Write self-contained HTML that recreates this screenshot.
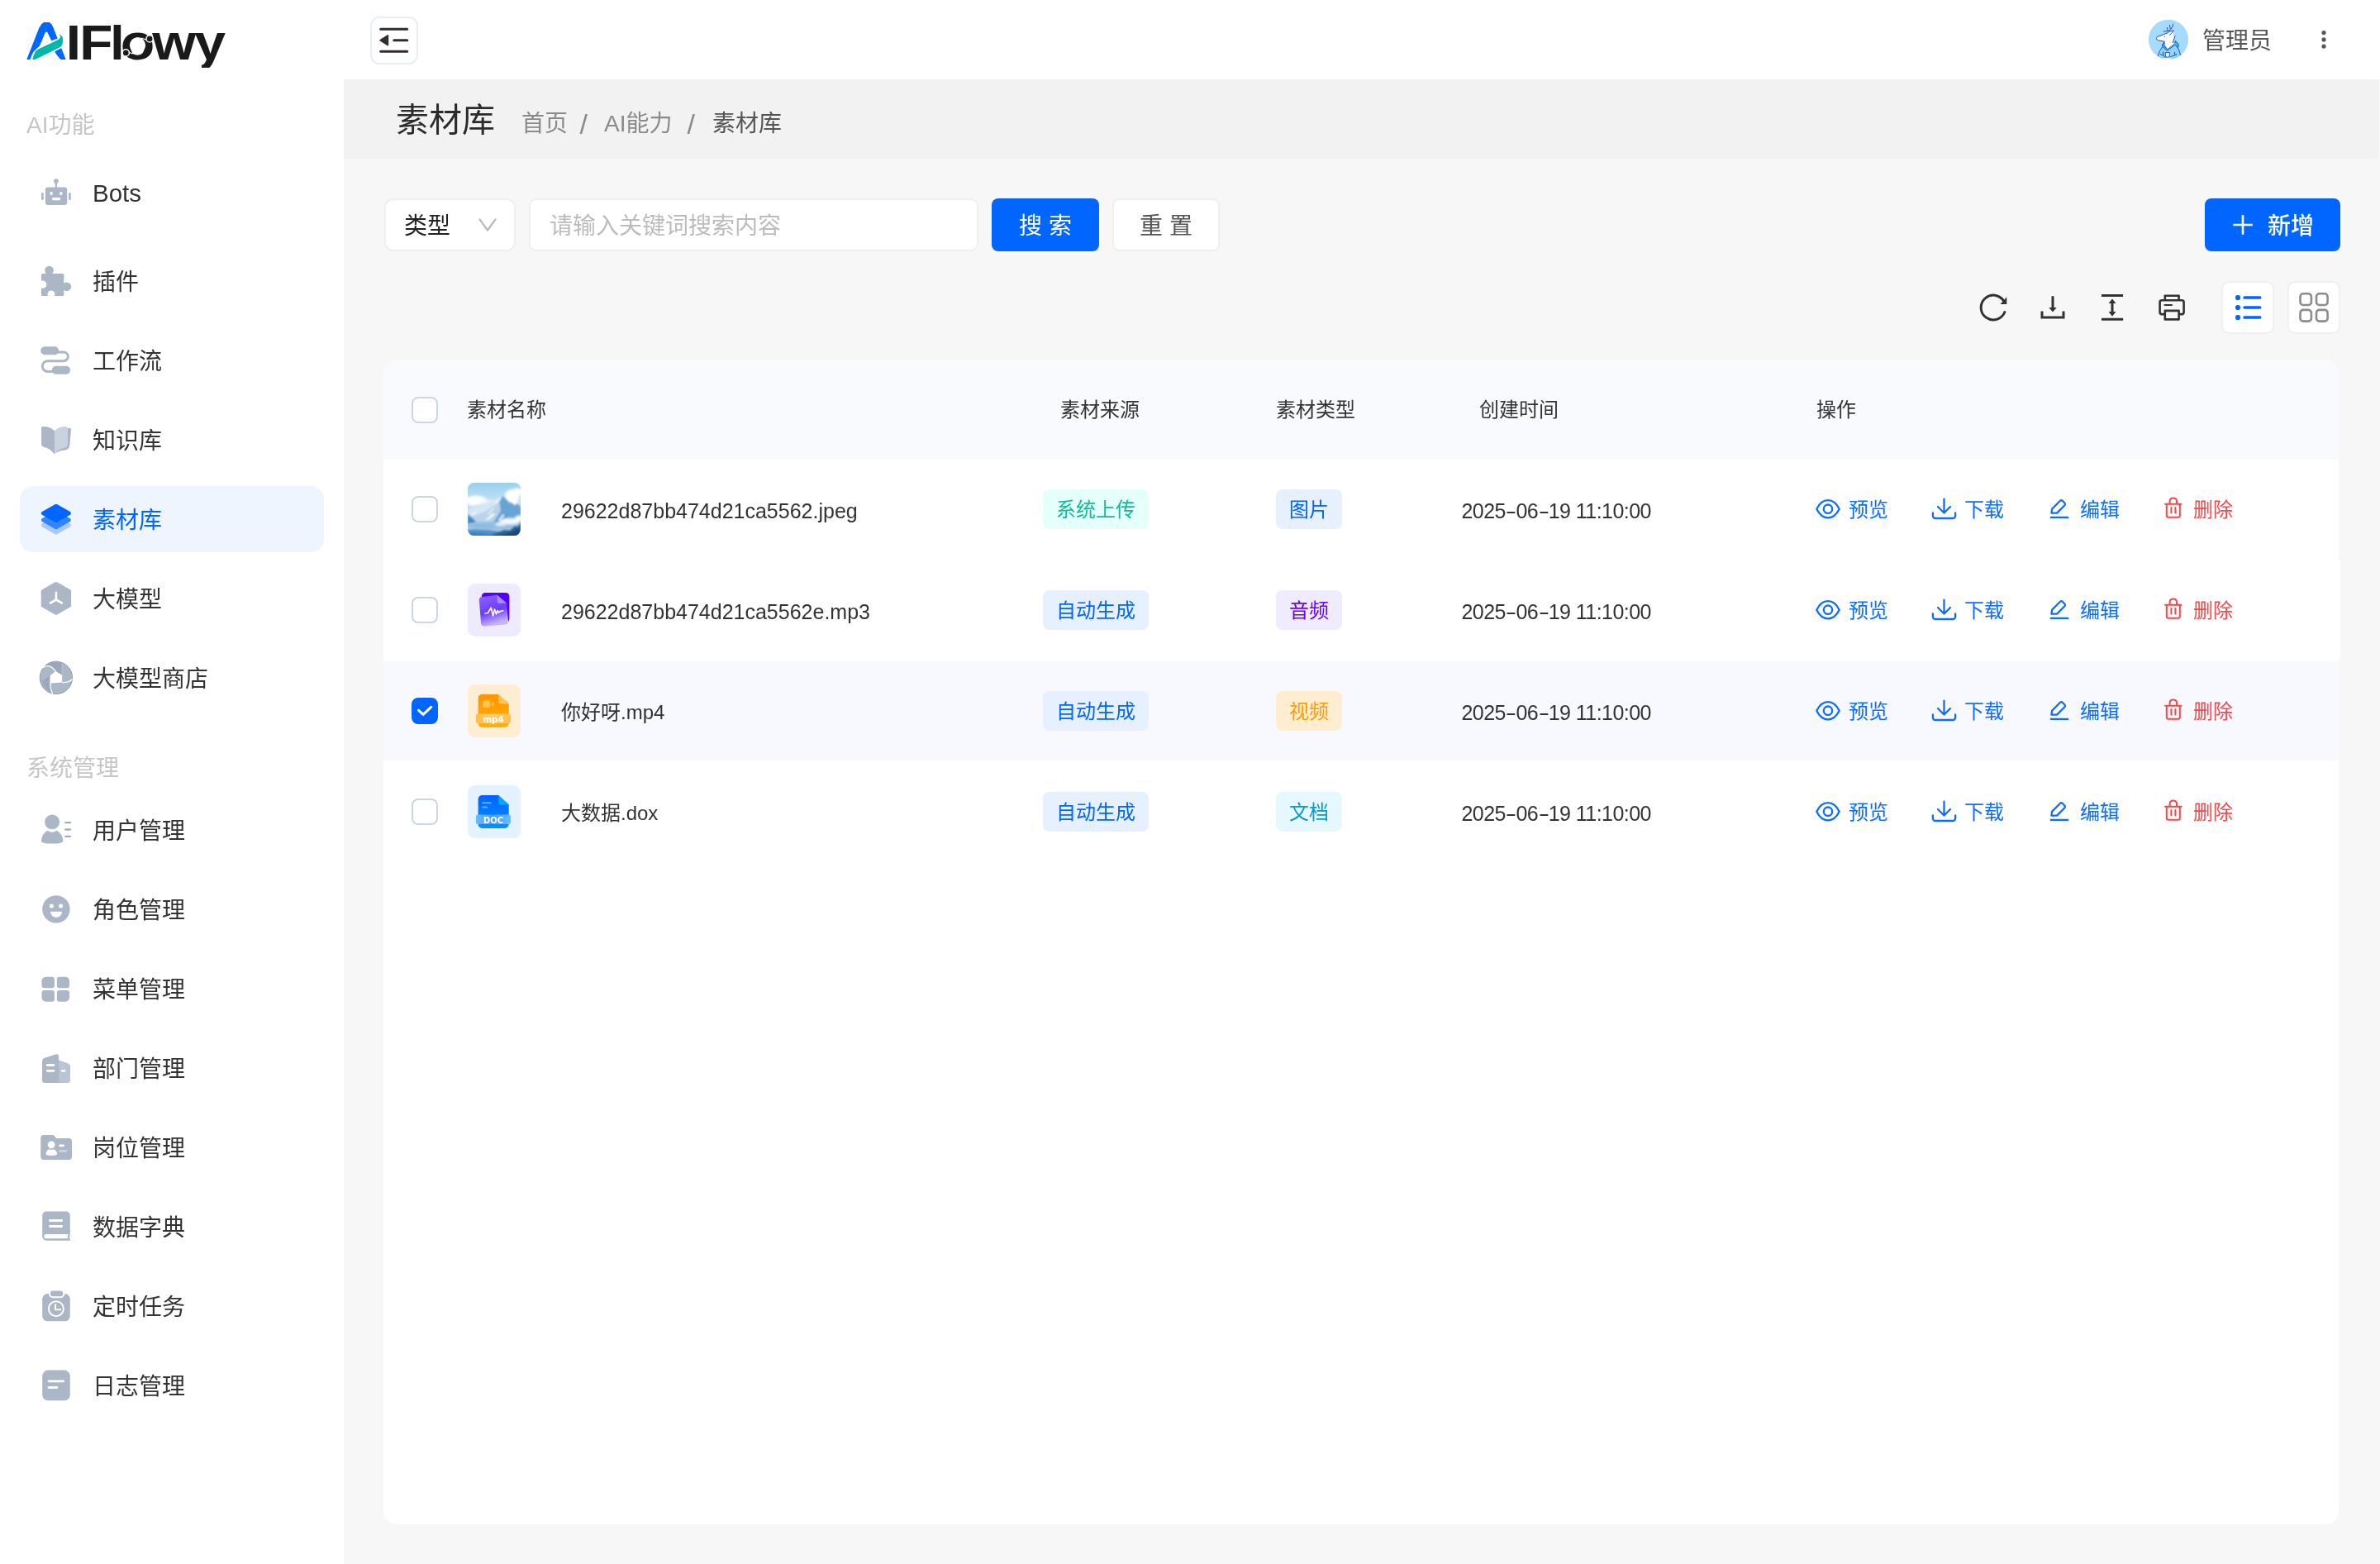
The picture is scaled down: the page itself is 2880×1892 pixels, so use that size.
<!DOCTYPE html>
<html lang="zh-CN"><head><meta charset="utf-8"><title>素材库 - AIFlowy</title>
<style>
*{box-sizing:border-box;margin:0;padding:0}
html,body{width:2880px;height:1892px;overflow:hidden;background:#f7f7f7}
@media (max-width:1500px){html{zoom:0.5}}
body{position:relative;will-change:transform;font-family:"Liberation Sans","Noto Sans CJK SC",sans-serif;color:#333;-webkit-font-smoothing:antialiased}
.abs,.sl,.cb,.fn,.tag,.dt,.ac,.th,.sec,.bc{position:absolute;white-space:nowrap}
#side{position:absolute;left:0;top:0;width:416px;height:1892px;background:#fff}
#head{position:absolute;left:416px;top:0;width:2464px;height:96px;background:#fff}
#crumb{position:absolute;left:416px;top:96px;width:2462px;height:96px;background:#f2f2f2}
.sec{left:32px;font-size:28px;line-height:40px;color:#c6c6c6}
.sl{left:112px;font-size:28px;line-height:40px;height:40px;color:#333}
.sl.act{color:#0066ff}
#actbg{position:absolute;left:24px;top:588px;width:368px;height:80px;border-radius:16px;background:#eff5ff}
svg{position:absolute;left:0;top:0;overflow:visible}
#card{position:absolute;left:464px;top:436px;width:2366px;height:1408px;background:#fff;border-radius:16px;overflow:hidden}
#thead{position:absolute;left:0;top:0;width:100%;height:120px;background:#f9fafe}
#selrow{position:absolute;left:0;top:364px;width:100%;height:120px;background:#f8f9fe}
.th{font-size:24px;line-height:36px;top:478px;color:#333}
.cb{left:498px;width:32px;height:32px;border:2px solid #ccd6e3;border-radius:8px;background:#fff}
.cb.on{background:#0066ff;border-color:#0066ff;box-shadow:0 0 0 1.2px #fff}
.fn{left:679px;font-size:24px;line-height:40px;color:#333}
.dt{left:1768.5px;font-size:25px;line-height:42px;letter-spacing:-0.55px;color:#333}
.dt i{font-style:normal;display:inline-block;transform:scaleX(1.6);margin:0 2.4px}
.tag{height:48px;line-height:50px;font-size:24px;text-align:center;border-radius:8px}
.tg{background:#e5fffa;color:#14b89a}
.tb{background:#e6f0ff;color:#0066ff}
.tp{background:#f0ebff;color:#6600ff}
.to{background:#ffedd1;color:#ff9b05}
.tc{background:#e5f8fe;color:#0a9ac7}
.ac{font-size:24px;line-height:40px}
.ab{color:#0d6efd}
.ar{color:#f5484a}
.btn{position:absolute;height:64px;line-height:64px;font-size:28px;text-align:center;border-radius:8px;white-space:nowrap}
</style></head><body>
<div id="side"></div>
<div id="head"></div>
<div id="crumb"></div>
<div id="actbg"></div>

<!-- logo -->
<svg width="416" height="96" viewBox="0 0 416 96"><text transform="matrix(0.66 0 0 0.6 0 72)" font-family="'Liberation Sans',sans-serif" font-weight="700" fill="#1a1a1a"><tspan x="46.21" font-size="106.9" fill="#0066ff">A</tspan><tspan x="121.02" font-size="99.6">I</tspan><tspan x="145.79" font-size="99.6">F</tspan><tspan x="201.89" font-size="94.5">l</tspan><tspan x="221" font-size="103">o</tspan><tspan x="279.05" font-size="103">w</tspan><tspan x="356.36" font-size="103">y</tspan></text><path d="M46.5 26.5 H54 Q50.3 28 48.3 32.6 L46.5 33 Z M66 26.5 H58.6 Q62.3 28 64.2 32.6 L66 33 Z" fill="#fff"/><path d="M56.3 38.4 L47.5 56.1 L43.6 59.4 L40.4 62.8 L38.3 67 L36.4 72.6 H74 L69.5 67.5 Q67.2 64.5 66.3 62.2 L74.5 58 L77 58 L71.8 45.8 L62.3 49.2 L57.8 40 Z" fill="#fff"/><path d="M39.2 72 Q40.5 66 42.9 62.2 Q44.3 60.2 46.8 59.2 L70.6 47.9 Q73.2 46.5 73.2 44.3 Q73 42.2 70.6 41.3 Q74.5 41.8 75.9 45.8 Q76.8 50 75.3 54 Q74.3 56.5 72 57.4 L43.5 71.6 Q42.8 72 42 72 Z" fill="#00b8a9"/><path d="M53.6 41.5 L56.3 33.8 L59 41.5 Q56.3 35.6 53.6 41.5Z" fill="#0066ff"/><rect x="234" y="81.9" width="30" height="5" fill="#fff"/><rect x="235" y="75.5" width="9" height="8" fill="#fff"/><circle cx="166.5" cy="54.8" r="9.6" fill="#fff"/><path d="M176.6 48.3 Q173.5 46.3 170.2 46" fill="none" stroke="#fff" stroke-width="1.1"/><path d="M156.4 63.4 Q160 65 164.4 64.9" fill="none" stroke="#fff" stroke-width="1.1"/><circle cx="152.3" cy="63.9" r="4.1" fill="#1a1a1a" stroke="#fff" stroke-width="1.5"/><circle cx="181.1" cy="46.9" r="4.1" fill="#1a1a1a" stroke="#fff" stroke-width="1.5"/></svg>

<div class="sec" style="top:132px">AI功能</div>
<div class="sec" style="top:910px">系统管理</div>
<div class="sl" style="top:216px;font-size:29.5px;top:214px">Bots</div>
<div class="sl" style="top:322px">插件</div>
<div class="sl" style="top:418px">工作流</div>
<div class="sl" style="top:514px">知识库</div>
<div class="sl act" style="top:610px">素材库</div>
<div class="sl" style="top:706px">大模型</div>
<div class="sl" style="top:802px">大模型商店</div>
<div class="sl" style="top:986px">用户管理</div>
<div class="sl" style="top:1082px">角色管理</div>
<div class="sl" style="top:1178px">菜单管理</div>
<div class="sl" style="top:1274px">部门管理</div>
<div class="sl" style="top:1370px">岗位管理</div>
<div class="sl" style="top:1466px">数据字典</div>
<div class="sl" style="top:1562px">定时任务</div>
<div class="sl" style="top:1658px">日志管理</div>
<svg width="416" height="1892" viewBox="0 0 416 1892">
<g fill="#abb6c6"><rect x="54.9" y="226.5" width="26.3" height="21.5" rx="3.2"/><circle cx="67.9" cy="219.1" r="2.9"/><rect x="66.8" y="219" width="2.2" height="8"/><rect x="50.1" y="233" width="2.6" height="9" rx="1.3"/><rect x="83.2" y="233" width="2.6" height="9" rx="1.3"/></g>
<g fill="#fff"><circle cx="62.1" cy="234" r="1.9"/><circle cx="73.8" cy="234" r="1.9"/><rect x="62.9" y="238.9" width="10.3" height="3.4" rx="1.7"/></g>
<g fill="#abb6c6"><rect x="50" y="331.1" width="27.3" height="26.9" rx="1.6"/><circle cx="59.5" cy="327.1" r="5.4"/><circle cx="80.7" cy="346.8" r="5.4"/></g><g fill="#fff"><circle cx="51.8" cy="344.2" r="4.6"/><circle cx="62" cy="356" r="4.5"/></g>
<g fill="#abb6c6"><rect x="49.3" y="419.3" width="21.8" height="10" rx="5"/><rect x="62.9" y="442.7" width="22.1" height="10" rx="5"/></g><path d="M69 426 H77 a5.35 5.35 0 0 1 0 10.7 H57.7 a6.4 6.4 0 0 0 0 12.8 H66" fill="none" stroke="#abb6c6" stroke-width="2.9"/>
<path d="M82 518 h2.6 q1.5 0 1.4 1.5 L84.4 538 q-0.6 6 -6 6.6 q-7 0.6 -11 3.4 L66 540 Z" fill="#abb6c6"/>
<path d="M50 518 q0 -2 2 -2 q8.5 -0.3 14 5.3 V549.7 q-5 -7 -12 -8.6 q-4 -1 -4 -5.2 Z" fill="#abb6c6"/>
<path d="M66 521.3 q5.5 -5.6 14 -5.3 q2 0 2 2 V536.5 q0 4.6 -4 5.2 q-8 1.2 -12 7.7 Z" fill="#c9d3e0"/>
<path d="M52 635.3 L67.9 626.3 L83.8 635.3 L67.9 644.3 Z" fill="#a6c8ff" stroke="#a6c8ff" stroke-width="4.2" stroke-linejoin="round"/><path d="M52 629.1 L67.9 620.1 L83.8 629.1 L67.9 638.1 Z" fill="#3384ff" stroke="#3384ff" stroke-width="4.2" stroke-linejoin="round"/><path d="M52 620.9 L67.9 611.9 L83.8 620.9 L67.9 629.9 Z" fill="#0066ff" stroke="#0066ff" stroke-width="4.2" stroke-linejoin="round"/>
<path d="M67.9 706.5 L83.6 715.4 V732.4 L67.9 741.3 L52.2 732.4 V715.4 Z" fill="#abb6c6" stroke="#abb6c6" stroke-width="5" stroke-linejoin="round"/><path d="M67.9 716.9 V725.5 M60.9 729.5 L67.9 725.5 L74.9 729.5" fill="none" stroke="#fff" stroke-width="2.6" stroke-linecap="round" stroke-linejoin="round"/>
<circle cx="67.9" cy="819.9" r="19.7" fill="#abb6c6" stroke="#8190a8" stroke-width="0.8"/>
<path d="M52 808 Q60 798 72 800.3 L75.1 803 V816.8 L67.2 811.7 Q60 803 52 808Z" fill="#9ba7b9"/>
<path d="M51 824.5 L60.5 817 V826.8 L62.5 838.8 Q54 835 51 824.5Z" fill="#9da9bb"/>
<path d="M60.5 817.6 L67.2 811.7 L75.1 816.8 V825.5 L60.5 826.8 Z" fill="#fff"/>
<path d="M51.3 808 Q58 803.5 63 807.5 L67.4 811.7" fill="none" stroke="#fff" stroke-width="1.3"/>
<path d="M75.1 825.6 Q84 826 87.3 821.5" fill="none" stroke="#fff" stroke-width="1.3"/>
<path d="M61 826.8 Q61 835 63.8 839.3" fill="none" stroke="#fff" stroke-width="1.3"/>
<path d="M75.1 803.2 V817" fill="none" stroke="#c3ccd9" stroke-width="0.8"/>
<g fill="#abb6c6"><circle cx="63.1" cy="994.4" r="8.95"/><path d="M57.4 1004.8 Q63.1 1008.6 68.8 1004.8 Q76 1009 76.4 1017.5 Q76.4 1020.6 63.1 1020.6 Q49.9 1020.6 49.9 1017.5 Q50.3 1009 57.4 1004.8Z"/></g><path d="M79.3 995.2 H85 M79.3 1003.5 H85 M79.3 1011.9 H85" stroke="#a3aec0" stroke-width="2.3" stroke-linecap="round"/>
<circle cx="67.9" cy="1099.9" r="16.7" fill="#abb6c6"/><g fill="#fff"><circle cx="62.4" cy="1096" r="2.5"/><circle cx="73.65" cy="1096" r="2.5"/><path d="M60.9 1102.7 H75.2 A7.15 7.15 0 0 1 60.9 1102.7Z"/></g>
<g fill="#abb6c6"><path d="M55.5 1181.7 H62.9 a3 3 0 0 1 3 3 V1192.3 a3 3 0 0 1 -3 3 H53.5 a3 3 0 0 1 -3 -3 V1186.7 a5 5 0 0 1 5 -5Z"/><path d="M71.9 1181.7 H79 a5 5 0 0 1 5 5 V1192.3 a3 3 0 0 1 -3 3 H71.9 a3 3 0 0 1 -3 -3 V1184.7 a3 3 0 0 1 3 -3Z"/><path d="M53.5 1198 H62.9 a3 3 0 0 1 3 3 V1208.8 a3 3 0 0 1 -3 3 H55.5 a5 5 0 0 1 -5 -5 V1201 a3 3 0 0 1 3 -3Z"/><path d="M71.9 1198 H81 a3 3 0 0 1 3 3 V1206.8 a5 5 0 0 1 -5 5 H71.9 a3 3 0 0 1 -3 -3 V1201 a3 3 0 0 1 3 -3Z"/></g>
<path d="M71 1282.4 L82.6 1286.4 Q85 1287.4 85 1290 V1306.8 Q85 1310 81.8 1310 H69 V1282.4Z" fill="#bac4d2"/><path d="M51 1283.6 Q51 1281 53.4 1280 L67.4 1275.4 Q71.1 1274.4 71.1 1278 V1310 H54.2 Q51 1310 51 1306.8Z" fill="#abb6c6"/><path d="M57.3 1288.5 H65 M57.3 1295.4 H65 M75.2 1295.4 H78" stroke="#fff" stroke-width="2.8" stroke-linecap="round"/>
<path d="M53.2 1373.1 H63.6 Q64.6 1373.1 65.3 1373.8 L68.2 1376.9 H83 a4 4 0 0 1 4 4 V1399 a4 4 0 0 1 -4 4 H53.2 a4 4 0 0 1 -4 -4 V1377.1 a4 4 0 0 1 4 -4Z" fill="#abb6c6"/><g fill="#fff"><circle cx="62.2" cy="1384.8" r="4.4"/><path d="M59.4 1389.9 Q62.2 1391.8 65 1389.9 Q68.9 1392.3 69.2 1396 Q69.2 1397.9 62.2 1397.9 Q55.4 1397.9 55.4 1396 Q55.7 1392.3 59.4 1389.9Z"/></g><path d="M72.5 1385.9 H76.7" stroke="#fff" stroke-width="2.6" stroke-linecap="round"/><path d="M72.5 1392.4 H79.9" stroke="#c9d3e0" stroke-width="2.6" stroke-linecap="round"/>
<path d="M56.2 1465.5 H79.8 a5 5 0 0 1 5 5 V1493.5 Q83 1496 84.8 1498.5 V1500.8 H56.2 a5 5 0 0 1 -5 -5 V1470.5 a5 5 0 0 1 5 -5Z" fill="#abb6c6"/><path d="M55.9 1493.1 H82.6 Q80.8 1495.7 82.6 1498.2 H55.9 a2.55 2.55 0 0 1 0 -5.1Z" fill="#fff"/><path d="M60.4 1476.5 H74.7 M60.4 1483.5 H74.7" stroke="#fff" stroke-width="2.8" stroke-linecap="round"/>
<rect x="51.2" y="1565" width="33.6" height="33.3" rx="6.5" fill="#abb6c6"/><rect x="59.9" y="1560.5" width="17.4" height="8.7" rx="4.3" fill="#abb6c6" stroke="#fff" stroke-width="2.1"/><circle cx="67.9" cy="1583.2" r="9" fill="none" stroke="#fff" stroke-width="2.1"/><path d="M67 1577.5 V1584.2 H74" fill="none" stroke="#fff" stroke-width="2.1"/>
<rect x="51.2" y="1657.6" width="33.6" height="36.7" rx="7" fill="#abb6c6"/><path d="M59.1 1670.8 H76.8 M59.1 1678.5 H68.8" stroke="#fff" stroke-width="2.8" stroke-linecap="round"/>
</svg>

<!-- header -->
<div class="abs" style="left:448px;top:20px;width:58px;height:58px;border:2px solid #e8eef9;border-radius:11px;background:#fff"></div>
<svg width="2880" height="96" viewBox="0 0 2880 96">
<path d="M460.7 35.3 H492.7 M476.8 48.7 H492.7 M460.7 62.3 H492.7" stroke="#2f2f2f" stroke-width="3.1" stroke-linecap="round"/>
<path d="M460.2 48.7 L469.3 43 V54.4Z" fill="#2f2f2f" stroke="#2f2f2f" stroke-width="1.8" stroke-linejoin="round"/>
<circle cx="2624" cy="47.8" r="24.1" fill="#a6dbfd"/>
<clipPath id="av"><circle cx="2624" cy="47.8" r="24.1"/></clipPath>
<g clip-path="url(#av)" stroke-linecap="round" stroke-linejoin="round">
<path d="M2611.3 68 Q2613 60.5 2616.8 56.5 L2622.4 61.3 L2634.5 52.5 Q2637.5 59 2638.7 67 L2636 73 H2611 Z" fill="#90d4fd"/>
<path d="M2616.6 54.1 Q2617.4 52 2619 51.3 L2618.9 54.8 L2622.4 59.4 L2631.6 52.6 L2632.4 49.5 Q2635.2 51.4 2636.6 54.8 L2635 57.6 Q2633.6 54 2631.4 54.6 L2622.4 61.3 L2616.8 56.4 Z" fill="#3fb7ff" stroke="#1e50c8" stroke-width="1"/>
<path d="M2609.3 46.4 Q2609.5 44.8 2610.8 44.4 L2623.9 39.5 L2630.4 37.2 L2629.7 42.9 L2632 43.3 L2629.3 51.8 L2631.8 52.3 L2622.4 59.4 L2618.9 54.8 L2619.3 50.2 L2611.6 48.8 Q2609.6 48 2609.3 46.4Z" fill="#fff"/>
<path d="M2623.9 39.5 L2610.8 44.4 Q2609.3 45 2609.4 46.6 Q2609.8 48.3 2611.6 48.8 L2619.3 50.2 L2618.9 54.8 L2622.4 59.4 M2624.3 37.9 L2630.4 37.2 L2625.3 42.5 M2632 43.3 L2629.3 51.8 M2624.3 37.9 Q2629 34.5 2629.7 29.1 M2622.4 33.3 L2623.2 37.2 M2625.5 30.3 L2626.2 34.9 M2618.2 38.3 L2624.3 37.2 M2616.6 56.7 Q2613 60.5 2611.3 67.9 M2634.7 56.4 Q2637.3 60.5 2638.5 66.7 M2614.3 65.5 l3.4 1.6 M2617.5 62.8 l0.3 4.3 l2.2 2.6 M2631.4 63.2 l0.5 3.4 l-5.2 2 M2633.8 66 l-2.4 0.7" fill="none" stroke="#1e50c8" stroke-width="1"/>
<circle cx="2619.5" cy="44.5" r="0.7" fill="#1e50c8"/>
<path d="M2620.5 63.6 H2625.5 L2625.1 68.4 Q2623 70 2621 68.8Z" fill="#fff" stroke="#1e50c8" stroke-width="1"/>
<ellipse cx="2622" cy="71.5" rx="8" ry="1.6" fill="#e9f7ff"/>
</g>
<g fill="#55556a"><circle cx="2812" cy="39.6" r="2.6"/><circle cx="2812" cy="47.9" r="2.6"/><circle cx="2812" cy="56.1" r="2.6"/></g>
</svg>
<div class="abs" style="left:2665px;top:30px;font-size:28px;line-height:40px;color:#555">管理员</div>

<!-- breadcrumb -->
<div class="abs" style="left:479px;top:117px;font-size:40px;line-height:56px;color:#2b2b2b">素材库</div>
<div class="bc" style="left:631px;top:130px;font-size:28px;line-height:40px;color:#8a8a8a">首页</div>
<div class="bc" style="left:701.5px;top:130px;font-size:34px;line-height:40px;color:#8a8a8a">/</div>
<div class="bc" style="left:731px;top:130px;font-size:28px;line-height:40px;color:#8a8a8a">AI能力</div>
<div class="bc" style="left:831.5px;top:130px;font-size:34px;line-height:40px;color:#8a8a8a">/</div>
<div class="bc" style="left:862px;top:130px;font-size:28px;line-height:40px;color:#555">素材库</div>

<!-- search bar -->
<div class="abs" style="left:464.5px;top:240px;width:159.5px;height:64px;background:#fff;border-radius:11px;border:2px solid #efefef"></div>
<div class="abs" style="left:489px;top:254px;font-size:28px;line-height:40px;color:#222">类型</div>
<div class="abs" style="left:639.5px;top:240px;width:544.5px;height:64px;background:#fff;border-radius:9px;border:2px solid #efefef"></div>
<div class="abs" style="left:665px;top:254px;font-size:28px;line-height:40px;color:#bcbcbc">请输入关键词搜索内容</div>
<div class="btn" style="left:1200px;top:240px;width:130px;background:#0066ff;color:#fff;line-height:68px">搜 索</div>
<div class="btn" style="left:1346px;top:240px;width:130px;height:64px;line-height:64px;background:#fff;color:#555;border:2px solid #efefef">重 置</div>
<div class="btn" style="left:2668px;top:240px;width:164px;background:#0066ff;color:#fff;font-weight:500;text-align:left;padding-left:76px;line-height:68px">新增</div>

<!-- view toggle buttons -->
<div class="abs" style="left:2688px;top:340px;width:64px;height:64px;background:#fff;border-radius:9px;border:2px solid #f0f0f0"></div>
<div class="abs" style="left:2768px;top:340px;width:64px;height:64px;background:#fff;border-radius:9px;border:2px solid #f0f0f0"></div>

<!-- table card -->
<div id="card"><div id="thead"></div><div id="selrow"></div></div>
<div class="abs" style="left:2830px;top:678px;width:2px;height:120px;background:#fff"></div>
<div class="cb" style="top:480px"></div>
<div class="th" style="left:565px">素材名称</div>
<div class="th" style="left:1283px">素材来源</div>
<div class="th" style="left:1544px">素材类型</div>
<div class="th" style="left:1790px">创建时间</div>
<div class="th" style="left:2198px">操作</div>
<div class="cb" style="top:600px"></div>
<div class="fn" style="font-size:25px;top:598px">29622d87bb474d21ca5562.jpeg</div>
<div class="tag tg" style="left:1262px;width:128px;top:592px">系统上传</div>
<div class="tag tb" style="left:1544px;width:80px;top:592px">图片</div>
<div class="dt" style="top:597px">2025<i>-</i>06<i>-</i>19 11:10:00</div>
<div class="ac ab" style="left:2237px;top:597px">预览</div>
<div class="ac ab" style="left:2377px;top:597px">下载</div>
<div class="ac ab" style="left:2517px;top:597px">编辑</div>
<div class="ac ar" style="left:2654px;top:597px">删除</div>
<div class="cb" style="top:722px"></div>
<div class="fn" style="font-size:25px;top:720px">29622d87bb474d21ca5562e.mp3</div>
<div class="tag tb" style="left:1262px;width:128px;top:714px">自动生成</div>
<div class="tag tp" style="left:1544px;width:80px;top:714px">音频</div>
<div class="dt" style="top:719px">2025<i>-</i>06<i>-</i>19 11:10:00</div>
<div class="ac ab" style="left:2237px;top:719px">预览</div>
<div class="ac ab" style="left:2377px;top:719px">下载</div>
<div class="ac ab" style="left:2517px;top:719px">编辑</div>
<div class="ac ar" style="left:2654px;top:719px">删除</div>
<div class="cb on" style="top:844px"></div>
<div class="fn" style="top:842px">你好呀.mp4</div>
<div class="tag tb" style="left:1262px;width:128px;top:836px">自动生成</div>
<div class="tag to" style="left:1544px;width:80px;top:836px">视频</div>
<div class="dt" style="top:841px">2025<i>-</i>06<i>-</i>19 11:10:00</div>
<div class="ac ab" style="left:2237px;top:841px">预览</div>
<div class="ac ab" style="left:2377px;top:841px">下载</div>
<div class="ac ab" style="left:2517px;top:841px">编辑</div>
<div class="ac ar" style="left:2654px;top:841px">删除</div>
<div class="cb" style="top:966px"></div>
<div class="fn" style="top:964px">大数据.dox</div>
<div class="tag tb" style="left:1262px;width:128px;top:958px">自动生成</div>
<div class="tag tc" style="left:1544px;width:80px;top:958px">文档</div>
<div class="dt" style="top:963px">2025<i>-</i>06<i>-</i>19 11:10:00</div>
<div class="ac ab" style="left:2237px;top:963px">预览</div>
<div class="ac ab" style="left:2377px;top:963px">下载</div>
<div class="ac ab" style="left:2517px;top:963px">编辑</div>
<div class="ac ar" style="left:2654px;top:963px">删除</div>

<svg width="2880" height="1892" viewBox="0 0 2880 1892">
<!-- select chevron, plus -->
<path d="M580.5 265.5 L590 278.5 L599.5 265.5" fill="none" stroke="#b9b9b9" stroke-width="2.2" stroke-linecap="round" stroke-linejoin="round"/>
<path d="M2702.3 272 H2725.8 M2714 260.2 V283.8" stroke="#fff" stroke-width="2.6"/>
<!-- toolbar icons -->
<g fill="none" stroke="#333" stroke-width="3">
<path d="M2426 366.8 A14.9 14.9 0 1 0 2426.3 376.4"/>
<path d="M2471 376.6 V383.9 H2497 V376.6 M2484 358.3 V373"/>
<path d="M2543 357.6 H2569.1 M2543 386.3 H2569.1 M2556 365.5 V378.5"/>
</g>
<g fill="#333"><path d="M2428.3 359.2 V367.9 H2420.5 Z"/><path d="M2479.3 372 H2488.7 L2484 377.6Z"/><path d="M2551.5 367 H2560.5 L2556 361.4Z M2551.5 377 H2560.5 L2556 382.7Z"/></g>
<g fill="none" stroke="#333" stroke-width="2.6" stroke-linejoin="round"><path d="M2619.8 363.3 V357.7 H2636.6 V363.3"/><path d="M2619.8 380.1 H2616 a2.4 2.4 0 0 1 -2.4 -2.4 V365.7 a2.4 2.4 0 0 1 2.4 -2.4 H2640.2 a2.4 2.4 0 0 1 2.4 2.4 V377.7 a2.4 2.4 0 0 1 -2.4 2.4 H2636.6"/><rect x="2619.8" y="375.9" width="16.8" height="10.5"/><path d="M2619.5 369 H2628" stroke-width="2.2" stroke-linecap="round"/></g>
<!-- list icon -->
<g fill="#0066ff"><circle cx="2708" cy="360" r="3.1"/><circle cx="2708" cy="372" r="3.1"/><circle cx="2708" cy="384" r="3.1"/></g>
<path d="M2716 360 H2734.8 M2716 372 H2734.8 M2716 384 H2734.8" stroke="#0066ff" stroke-width="3.5" stroke-linecap="round"/>
<g fill="none" stroke="#8c8c8c" stroke-width="2.6"><rect x="2783.5" y="355.3" width="13.4" height="13.7" rx="3.6"/><rect x="2803" y="355.3" width="13.6" height="13.7" rx="3.6"/><rect x="2783.5" y="374.9" width="13.4" height="13.7" rx="3.6"/><rect x="2803" y="374.9" width="13.6" height="13.7" rx="3.6"/></g>
<!-- checkbox tick -->
<path d="M506.6 859.3 L512.1 864.3 L521.6 855.3" fill="none" stroke="#fff" stroke-width="3.1" stroke-linecap="round" stroke-linejoin="round"/>
<defs>
<clipPath id="c1"><rect x="566" y="584" width="64" height="64" rx="7.5"/></clipPath>
<linearGradient id="sky" x1="0" y1="0" x2="0" y2="1"><stop offset="0" stop-color="#9ccfec"/><stop offset="0.35" stop-color="#bfe2f4"/><stop offset="1" stop-color="#8fbce0"/></linearGradient>
<linearGradient id="mt" x1="0" y1="0" x2="1" y2="1"><stop offset="0" stop-color="#e8f1f8"/><stop offset="1" stop-color="#6f9fc8"/></linearGradient>
<filter id="bl" x="-20%" y="-20%" width="140%" height="140%"><feGaussianBlur stdDeviation="0.9"/></filter>
<filter id="bl2" x="-20%" y="-20%" width="140%" height="140%"><feGaussianBlur stdDeviation="1.7"/></filter>
<linearGradient id="au" x1="0" y1="0" x2="0.3" y2="1"><stop offset="0" stop-color="#8f63ff"/><stop offset="0.6" stop-color="#6a3dfa"/><stop offset="1" stop-color="#c7b4ff"/></linearGradient>
<linearGradient id="og" x1="0" y1="0" x2="0" y2="1"><stop offset="0" stop-color="#ff9500"/><stop offset="1" stop-color="#ffb00a"/></linearGradient>
<linearGradient id="bg" x1="0" y1="0" x2="0" y2="1"><stop offset="0" stop-color="#0062ff"/><stop offset="1" stop-color="#0093ff"/></linearGradient>
<linearGradient id="ob" x1="0" y1="0" x2="1" y2="0"><stop offset="0" stop-color="#ffbe4a"/><stop offset="0.5" stop-color="#ffcf72"/><stop offset="1" stop-color="#ffbe4a"/></linearGradient>
<linearGradient id="bb" x1="0" y1="0" x2="1" y2="0"><stop offset="0" stop-color="#6bbcff"/><stop offset="0.5" stop-color="#3d9eff"/><stop offset="1" stop-color="#6bbcff"/></linearGradient>
</defs>
<g clip-path="url(#c1)">
<rect x="566" y="584" width="64" height="64" fill="url(#sky)"/>
<g filter="url(#bl2)"><ellipse cx="576" cy="606" rx="13" ry="6.5" fill="#fff"/><ellipse cx="590" cy="609" rx="10" ry="4" fill="#f2f8fc"/><ellipse cx="620" cy="600" rx="9" ry="8" fill="#fff"/><ellipse cx="626" cy="595" rx="6" ry="4.5" fill="#fff"/><ellipse cx="622" cy="607" rx="5" ry="4" fill="#fff"/></g>
<g filter="url(#bl)">
<path d="M566 616.4 L574.6 611.5 L587.2 609.1 L598.9 604.2 L607.9 599.9 L613.4 605.2 L616.9 609.1 L618.8 608.1 L622.7 612 L625.6 609.6 L630 613 V648 H566Z" fill="#b9d3ea"/>
<path d="M607.9 599.9 L613.4 605.2 L616.9 609.1 L618.8 608.1 L622.7 612 L625.6 609.6 L630 613 V634 L596 634 L606 618 L604.5 608Z" fill="#5f9bcd"/>
<path d="M607.9 599.9 L604.5 608 L606 618 L600 628 L612 622 L618 630 L630 626 V613 L625.6 609.6 L622.7 612 L618.8 608.1 L616.9 609.1Z" fill="#6aa5d6" opacity="0.8"/>
<path d="M566 616.4 L574.6 611.5 L587.2 609.1 L598.9 604.2 L607.9 599.9 L603 607 L596 613 L585 620 L572 624 L566 627Z" fill="#d6e6f4"/>
<path d="M606.5 601.5 L600.5 609.5 L598 611 L602 605Z M600 612.5 L592 621.5 L589 623 L596 615.5Z M596 621 L586 631 L592 628 L599 622Z M609 622 L602 630 L605 629 L610.5 623.5Z M577 618.5 L570 622.5 L568 624.5 L575.5 621Z" fill="#fff" opacity="0.95"/>
<path d="M566 621.7 L571 626 L577 632.4 L566 634Z" fill="#3d8cc6"/>
</g>
<g filter="url(#bl2)"><ellipse cx="598" cy="636" rx="34" ry="4.5" fill="#8fbce0"/><ellipse cx="617" cy="630.5" rx="13" ry="4" fill="#f4f9fd"/><ellipse cx="628" cy="627" rx="5" ry="3.5" fill="#fff"/><ellipse cx="606" cy="634" rx="7" ry="2.5" fill="#e3eff8"/></g>
<g filter="url(#bl)"><path d="M566 650 V640.5 Q585 639.5 608 643.5 L598 650Z" fill="#4f93c9"/><path d="M566 650 V644.5 Q580 643 594 647 L590 650Z" fill="#3f82bb"/><path d="M588 650 L598 645.5 L610 641 L617 641.5 L623 636.5 L626 637.5 L630 633 V650Z" fill="#2c6496"/><path d="M600 650 L612 645.5 L622 642 L630 637.5 V650Z" fill="#1b4a7a"/></g>
</g>
<rect x="566" y="706" width="64" height="64" rx="9" fill="#efebff"/>
<rect x="582.8" y="717" width="33.6" height="36" rx="4.5" fill="#5200ff"/>
<path d="M583.5 722 Q579.6 722.3 579.9 726 L582 753.5 Q582.4 758 586.5 757.6 L611.3 755.4 Q615.4 755 615 751 L613 729.5 L601.5 719.8 Z" fill="url(#au)"/>
<path d="M601.5 719.8 L613 729.5 L605.5 730.1 Q602 730.3 601.8 727Z" fill="#a98cff"/>
<path d="M587 742 L590.5 741.5 L592 738.8 L594.3 735.3 L596.5 745 L598.5 737 L600.5 742.8 L602 738.6 L603.5 741 L605.2 739.5 L608.5 738.8" fill="none" stroke="#fff" stroke-width="1.7" stroke-linecap="round" stroke-linejoin="round"/>
<rect x="566" y="828" width="64" height="64" rx="9" fill="#fdeed3"/>
<path d="M583.6 839.9 H603.2 L615.7 851.6 V875 a5 5 0 0 1 -5 5 H583.6 a5 5 0 0 1 -5 -5 V844.9 a5 5 0 0 1 5 -5Z" fill="url(#og)"/>
<path d="M603.2 839.9 L615.7 851.6 H607 Q603.2 851.6 603.2 847.8Z" fill="#ffc24f"/>
<rect x="575.9" y="863.6" width="42.1" height="11.4" rx="2.5" fill="url(#ob)"/>
<rect x="584.2" y="847.6" width="9" height="8.4" rx="2" fill="#ffc14f"/><path d="M593.6 851.8 L597.9 848.2 V855.4Z" fill="#ffc14f"/>
<rect x="566" y="950" width="64" height="64" rx="9" fill="#e3f2ff"/>
<path d="M583.6 961.9 H603.2 L615.7 973.6 V997 a5 5 0 0 1 -5 5 H583.6 a5 5 0 0 1 -5 -5 V966.9 a5 5 0 0 1 5 -5Z" fill="url(#bg)"/>
<path d="M603.2 961.9 L615.7 973.6 H607 Q603.2 973.6 603.2 969.8Z" fill="#00a8ff"/>
<rect x="575.9" y="985.6" width="42.1" height="11.4" rx="2.5" fill="url(#bb)"/>
<path d="M584.2 971.3 H593.7 M584.2 976.4 H589" stroke="#5caeff" stroke-width="2" stroke-linecap="round"/>
<text x="597" y="873.7" text-anchor="middle" font-family="'DejaVu Sans','Liberation Sans',sans-serif" font-weight="700" font-size="10.2" fill="#fff" textLength="25" lengthAdjust="spacingAndGlyphs">mp4</text>
<text x="597" y="995.6" text-anchor="middle" font-family="'DejaVu Sans','Liberation Sans',sans-serif" font-weight="700" font-size="9.6" fill="#fff" textLength="24" lengthAdjust="spacingAndGlyphs">DOC</text>
<g transform="translate(0,0)" fill="none" stroke-width="2.3" stroke-linecap="round" stroke-linejoin="round">
<path d="M2198.3 615.7 C2201.6 609 2206 605.1 2212 605.1 C2218 605.1 2222.4 609 2225.7 615.7 C2222.4 622.4 2218 626.3 2212 626.3 C2206 626.3 2201.6 622.4 2198.3 615.7Z" stroke="#0d6efd"/><circle cx="2212" cy="615.7" r="5.2" stroke="#0d6efd"/>
<path d="M2352.5 603.6 V619.6 M2345 613 L2352.5 620.5 L2360 613 M2338.9 620.5 V624 a3 3 0 0 0 3 3 H2363.1 a3 3 0 0 0 3 -3 V620.5" stroke="#0d6efd"/>
<path d="M2482.4 620.6 L2483.2 615.6 L2493 605.8 a1.9 1.9 0 0 1 2.7 0 L2498.4 608.5 a1.9 1.9 0 0 1 0 2.7 L2489 620.6 Z M2481.8 625.9 H2502.3" stroke="#0d6efd"/>
<path d="M2620 609.8 H2639.6 M2625.6 609.4 V606.3 Q2625.6 602.4 2629.8 602.4 Q2634 602.4 2634 606.3 V609.4 M2621.8 610.2 V623.7 a2 2 0 0 0 2 2 H2635.8 a2 2 0 0 0 2 -2 V610.2 M2627.4 614 V620.4 M2632.4 614 V620.4" stroke="#f5484a" stroke-width="2"/>
</g><g transform="translate(0,122)" fill="none" stroke-width="2.3" stroke-linecap="round" stroke-linejoin="round">
<path d="M2198.3 615.7 C2201.6 609 2206 605.1 2212 605.1 C2218 605.1 2222.4 609 2225.7 615.7 C2222.4 622.4 2218 626.3 2212 626.3 C2206 626.3 2201.6 622.4 2198.3 615.7Z" stroke="#0d6efd"/><circle cx="2212" cy="615.7" r="5.2" stroke="#0d6efd"/>
<path d="M2352.5 603.6 V619.6 M2345 613 L2352.5 620.5 L2360 613 M2338.9 620.5 V624 a3 3 0 0 0 3 3 H2363.1 a3 3 0 0 0 3 -3 V620.5" stroke="#0d6efd"/>
<path d="M2482.4 620.6 L2483.2 615.6 L2493 605.8 a1.9 1.9 0 0 1 2.7 0 L2498.4 608.5 a1.9 1.9 0 0 1 0 2.7 L2489 620.6 Z M2481.8 625.9 H2502.3" stroke="#0d6efd"/>
<path d="M2620 609.8 H2639.6 M2625.6 609.4 V606.3 Q2625.6 602.4 2629.8 602.4 Q2634 602.4 2634 606.3 V609.4 M2621.8 610.2 V623.7 a2 2 0 0 0 2 2 H2635.8 a2 2 0 0 0 2 -2 V610.2 M2627.4 614 V620.4 M2632.4 614 V620.4" stroke="#f5484a" stroke-width="2"/>
</g><g transform="translate(0,244)" fill="none" stroke-width="2.3" stroke-linecap="round" stroke-linejoin="round">
<path d="M2198.3 615.7 C2201.6 609 2206 605.1 2212 605.1 C2218 605.1 2222.4 609 2225.7 615.7 C2222.4 622.4 2218 626.3 2212 626.3 C2206 626.3 2201.6 622.4 2198.3 615.7Z" stroke="#0d6efd"/><circle cx="2212" cy="615.7" r="5.2" stroke="#0d6efd"/>
<path d="M2352.5 603.6 V619.6 M2345 613 L2352.5 620.5 L2360 613 M2338.9 620.5 V624 a3 3 0 0 0 3 3 H2363.1 a3 3 0 0 0 3 -3 V620.5" stroke="#0d6efd"/>
<path d="M2482.4 620.6 L2483.2 615.6 L2493 605.8 a1.9 1.9 0 0 1 2.7 0 L2498.4 608.5 a1.9 1.9 0 0 1 0 2.7 L2489 620.6 Z M2481.8 625.9 H2502.3" stroke="#0d6efd"/>
<path d="M2620 609.8 H2639.6 M2625.6 609.4 V606.3 Q2625.6 602.4 2629.8 602.4 Q2634 602.4 2634 606.3 V609.4 M2621.8 610.2 V623.7 a2 2 0 0 0 2 2 H2635.8 a2 2 0 0 0 2 -2 V610.2 M2627.4 614 V620.4 M2632.4 614 V620.4" stroke="#f5484a" stroke-width="2"/>
</g><g transform="translate(0,366)" fill="none" stroke-width="2.3" stroke-linecap="round" stroke-linejoin="round">
<path d="M2198.3 615.7 C2201.6 609 2206 605.1 2212 605.1 C2218 605.1 2222.4 609 2225.7 615.7 C2222.4 622.4 2218 626.3 2212 626.3 C2206 626.3 2201.6 622.4 2198.3 615.7Z" stroke="#0d6efd"/><circle cx="2212" cy="615.7" r="5.2" stroke="#0d6efd"/>
<path d="M2352.5 603.6 V619.6 M2345 613 L2352.5 620.5 L2360 613 M2338.9 620.5 V624 a3 3 0 0 0 3 3 H2363.1 a3 3 0 0 0 3 -3 V620.5" stroke="#0d6efd"/>
<path d="M2482.4 620.6 L2483.2 615.6 L2493 605.8 a1.9 1.9 0 0 1 2.7 0 L2498.4 608.5 a1.9 1.9 0 0 1 0 2.7 L2489 620.6 Z M2481.8 625.9 H2502.3" stroke="#0d6efd"/>
<path d="M2620 609.8 H2639.6 M2625.6 609.4 V606.3 Q2625.6 602.4 2629.8 602.4 Q2634 602.4 2634 606.3 V609.4 M2621.8 610.2 V623.7 a2 2 0 0 0 2 2 H2635.8 a2 2 0 0 0 2 -2 V610.2 M2627.4 614 V620.4 M2632.4 614 V620.4" stroke="#f5484a" stroke-width="2"/>
</g>
</svg>
</body></html>
